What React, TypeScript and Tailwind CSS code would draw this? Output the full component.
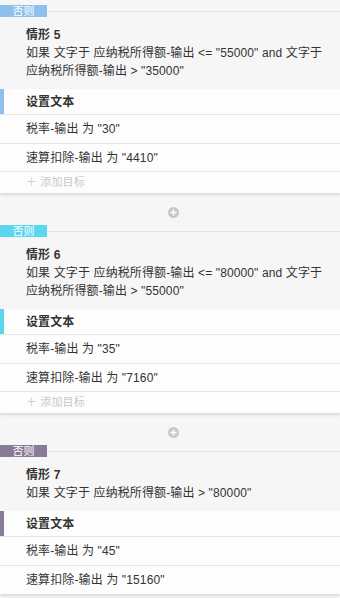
import React from "react";

type Sec = {
  n: number;
  color: string;
  cond: string[];
  rate: string;
  deduct: string;
  add: boolean;
};

const sections: Sec[] = [
  {
    n: 5,
    color: "bg-[#8ec0ec]",
    cond: ['如果 文字于 应纳税所得额-输出 <= "55000" and 文字于', '应纳税所得额-输出 > "35000"'],
    rate: "30",
    deduct: "4410",
    add: true,
  },
  {
    n: 6,
    color: "bg-[#5ad6ef]",
    cond: ['如果 文字于 应纳税所得额-输出 <= "80000" and 文字于', '应纳税所得额-输出 > "55000"'],
    rate: "35",
    deduct: "7160",
    add: true,
  },
  {
    n: 7,
    color: "bg-[#877b98]",
    cond: ['如果 文字于 应纳税所得额-输出 > "80000"'],
    rate: "45",
    deduct: "15160",
    add: false,
  },
];

function PlusCircle() {
  return (
    <div className="flex h-[32px] items-center justify-center">
      <svg width="11" height="11" viewBox="0 0 11 11" className="ml-[6px] mt-[6px]">
        <circle cx="5.5" cy="5.5" r="5.5" fill="#c8c8c8" />
        <rect x="2.5" y="4.75" width="6" height="1.5" fill="#fff" />
        <rect x="4.75" y="2.5" width="1.5" height="6" fill="#fff" />
      </svg>
    </div>
  );
}

function Section({ s }: { s: Sec }) {
  return (
    <div>
      <div className="relative flex h-[12px] items-center">
        <div
          className={`${s.color} z-10 flex h-[12px] w-[47px] items-center justify-center text-[11px] leading-[12px] text-white`}
        >
          否则
        </div>
        <div className="h-px flex-1 bg-[#e3e3e3]" />
      </div>
      <div className="pl-[26px] pt-[9px] pb-[9px] text-[12px] leading-[18px] tracking-[0.12px] text-[#333]">
        <div className="font-bold">情形 {s.n}</div>
        {s.cond.map((c, i) => (
          <div key={i}>{c}</div>
        ))}
      </div>
      <div className="bg-[#fdfdfd] text-[12px] tracking-[0.12px] text-[#333] shadow-[0_2px_3px_rgba(0,0,0,0.12)]">
        <div className="relative flex h-[26px] items-center border-b border-[#e6e6e6] pl-[26px] pt-[1px] font-semibold">
          <div className={`absolute left-0 top-0 h-full w-[4px] ${s.color}`} />
          设置文本
        </div>
        <div className="flex h-[29px] items-center border-b border-[#e6e6e6] pl-[26px]">
          税率-输出 为 "{s.rate}"
        </div>
        <div
          className={`flex h-[28px] items-center pl-[26px] ${s.add ? "border-b border-[#e6e6e6]" : ""}`}
        >
          速算扣除-输出 为 "{s.deduct}"
        </div>
        {s.add && (
          <div className="flex h-[21px] items-center pl-[26px] text-[11px] text-[#c9c9c9]">
            ＋ 添加目标
          </div>
        )}
      </div>
    </div>
  );
}

export default function App() {
  return (
    <div
      className="h-[598px] w-[340px] overflow-hidden bg-[#f6f6f6] pt-[5px]"
      style={{ fontFamily: '"Liberation Sans", "Noto Sans CJK SC", sans-serif' }}
    >
      <Section s={sections[0]} />
      <PlusCircle />
      <Section s={sections[1]} />
      <PlusCircle />
      <Section s={sections[2]} />
    </div>
  );
}
